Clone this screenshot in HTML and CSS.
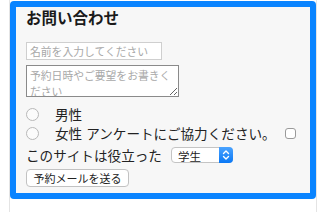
FILE: index.html
```html
<!DOCTYPE html>
<html lang="ja">
<head>
    <meta charset="UTF-8">
    <meta name="viewport" content="width=device-width, initial-scale=1.0">
    <title>お問い合わせ</title>
    <link rel="stylesheet" href="styles.css">
</head>
<body>
    <div class="page">
        <form class="contact-form" onsubmit="return false;">
            <h2>お問い合わせ</h2>

            <input type="text" class="name-input" placeholder="名前を入力してください">
            <textarea class="message-input" placeholder="予約日時やご要望をお書きく&#10;ださい"></textarea>

            <label class="row row-first">
                <input type="radio" name="gender" class="radio">
                <span>男性</span>
            </label>
            <div class="row row-second">
                <input type="radio" name="gender" class="radio">
                <span>女性</span>
                <span class="survey">アンケートにご協力ください。</span>
                <input type="checkbox" class="check">
            </div>
            <div class="row row-third">
                <span>このサイトは役立った</span>
                <span class="select-wrap">
                    <select class="job-select">
                        <option>学生</option>
                        <option>会社員</option>
                        <option>その他</option>
                    </select>
                    <span class="select-arrow">
                        <svg width="14" height="16" viewBox="0 0 14 16">
                            <path d="M4.5 6.5 L7 4 L9.5 6.5 M4.5 9.5 L7 12 L9.5 9.5" fill="none" stroke="#fff" stroke-width="1.4" stroke-linecap="round" stroke-linejoin="round"/>
                        </svg>
                    </span>
                </span>
            </div>

            <button type="submit" class="send-btn">予約メールを送る</button>
        </form>
    </div>
</body>
</html>
```

FILE: styles.css
```css
* {
    margin: 0;
    padding: 0;
    box-sizing: border-box;
}

body {
    background-color: #fff;
    font-family: "Noto Sans CJK JP", "Liberation Serif", serif;
    color: #222;
}

.page {
    margin-left: 9px;
    width: 308px;
    height: 212px;
    padding-top: 1px;
    border-left: 1px solid #e4e4e4;
    border-right: 1px solid #e4e4e4;
}

.contact-form {
    height: 198px;
    border: 6px solid #0a84ff;
    border-radius: 4px;
    background-color: #f7f7f7;
    padding: 0 10px;
}

h2 {
    font-size: 15.5px;
    font-weight: bold;
    line-height: 20px;
    color: #1a1a1a;
}

.name-input,
.message-input {
    display: block;
    font-family: "Noto Sans CJK JP", sans-serif;
    font-size: 10.8px;
    background-color: #fff;
    color: #222;
}

.name-input::placeholder,
.message-input::placeholder {
    color: #a8a8a8;
}

.name-input {
    margin-top: 15px;
    width: 136px;
    height: 18px;
    padding: 0 3px;
    border: 1px solid #cfcfcf;
}

.message-input {
    margin-top: 5px;
    width: 153px;
    height: 32px;
    padding: 1px 1px 1px 3px;
    line-height: 16px;
    border: 1px solid #8a8a8a;
    overflow: hidden;
}

.row {
    display: flex;
    align-items: center;
    font-size: 13.6px;
    white-space: nowrap;
}

.row-first {
    margin-top: 8px;
    height: 18px;
}

.row-second {
    height: 20px;
}

.row-third {
    margin-top: 2px;
    height: 20px;
}

.radio {
    appearance: none;
    width: 13px;
    height: 13px;
    margin-right: 16px;
    border: 1px solid #b8b8b8;
    border-radius: 50%;
    background-color: #fbfbfb;
}

.survey {
    margin-left: 4px;
}

.check {
    appearance: none;
    width: 11px;
    height: 11px;
    margin-left: 9px;
    border: 1px solid #9a9a9a;
    border-radius: 3px;
    background-color: #fff;
}

.select-wrap {
    position: relative;
    margin-left: 9px;
    display: inline-block;
}

.job-select {
    appearance: none;
    display: block;
    width: 62px;
    height: 16px;
    padding: 0 0 0 6px;
    border: 1px solid #c4c4c4;
    border-radius: 4px;
    background-color: #fff;
    font-family: "Noto Sans CJK JP", sans-serif;
    font-size: 11.5px;
    color: #222;
}

.select-arrow {
    position: absolute;
    top: 0;
    right: 0;
    width: 14px;
    height: 16px;
    border-radius: 0 4px 4px 0;
    background: linear-gradient(#4aa3ff, #0a78f5);
    display: flex;
}

.send-btn {
    display: block;
    margin-top: 4px;
    width: 103px;
    height: 18px;
    border: 1px solid #c2c2c2;
    border-radius: 4px;
    background-color: #fff;
    font-family: "Noto Sans CJK JP", sans-serif;
    font-size: 11px;
    color: #222;
}
```
